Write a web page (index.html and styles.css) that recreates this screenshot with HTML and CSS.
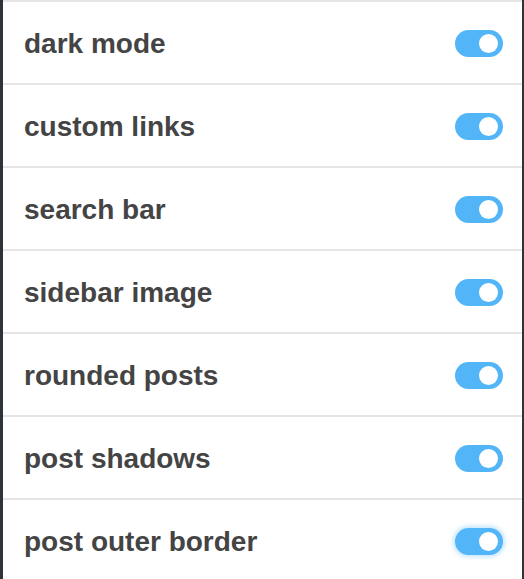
FILE: index.html
```html
<!DOCTYPE html>
<html lang="en">
<head>
    <meta charset="UTF-8">
    <meta name="viewport" content="width=device-width, initial-scale=1.0">
    <title>Settings</title>
    <link rel="stylesheet" href="styles.css">
</head>
<body>
    <div class="panel">
        <ul class="options">
            <li class="option"><span>dark mode</span><label class="toggle"><input type="checkbox" checked><span class="slider"></span></label></li>
            <li class="option"><span>custom links</span><label class="toggle"><input type="checkbox" checked><span class="slider"></span></label></li>
            <li class="option"><span>search bar</span><label class="toggle"><input type="checkbox" checked><span class="slider"></span></label></li>
            <li class="option"><span>sidebar image</span><label class="toggle"><input type="checkbox" checked><span class="slider"></span></label></li>
            <li class="option"><span>rounded posts</span><label class="toggle"><input type="checkbox" checked><span class="slider"></span></label></li>
            <li class="option"><span>post shadows</span><label class="toggle"><input type="checkbox" checked><span class="slider"></span></label></li>
            <li class="option"><span>post outer border</span><label class="toggle focused"><input type="checkbox" checked><span class="slider"></span></label></li>
        </ul>
    </div>
</body>
</html>
```

FILE: styles.css
```css
body {
    margin: 0;
    font-family: "Liberation Sans", Arial, sans-serif;
    background: white;
}
.panel {
    width: 519px;
    height: 579px;
    border-left: 3px solid #2f3438;
    border-right: 2px solid #2f3438;
    overflow: hidden;
}
.options {
    list-style: none;
    margin: 0;
    padding: 0;
}
.option {
    display: flex;
    align-items: center;
    justify-content: space-between;
    height: 81px;
    border-top: 2px solid #e6e6e6;
    padding: 0 19px 0 21px;
    font-size: 28px;
    font-weight: bold;
    color: #444;
}
.option > span {
    margin-top: 2px;
}
.toggle {
    position: relative;
    display: block;
    width: 48px;
    height: 27px;
    margin-top: 1px;
}
.toggle input {
    display: none;
}
.slider {
    position: absolute;
    inset: 0;
    background: #52b5f8;
    border-radius: 14px;
}
.slider::after {
    content: "";
    position: absolute;
    right: 5px;
    top: 4px;
    width: 19px;
    height: 19px;
    border-radius: 50%;
    background: white;
}
.focused .slider {
    box-shadow: 0 0 4px 2px rgba(82, 181, 248, 0.35);
}
```
